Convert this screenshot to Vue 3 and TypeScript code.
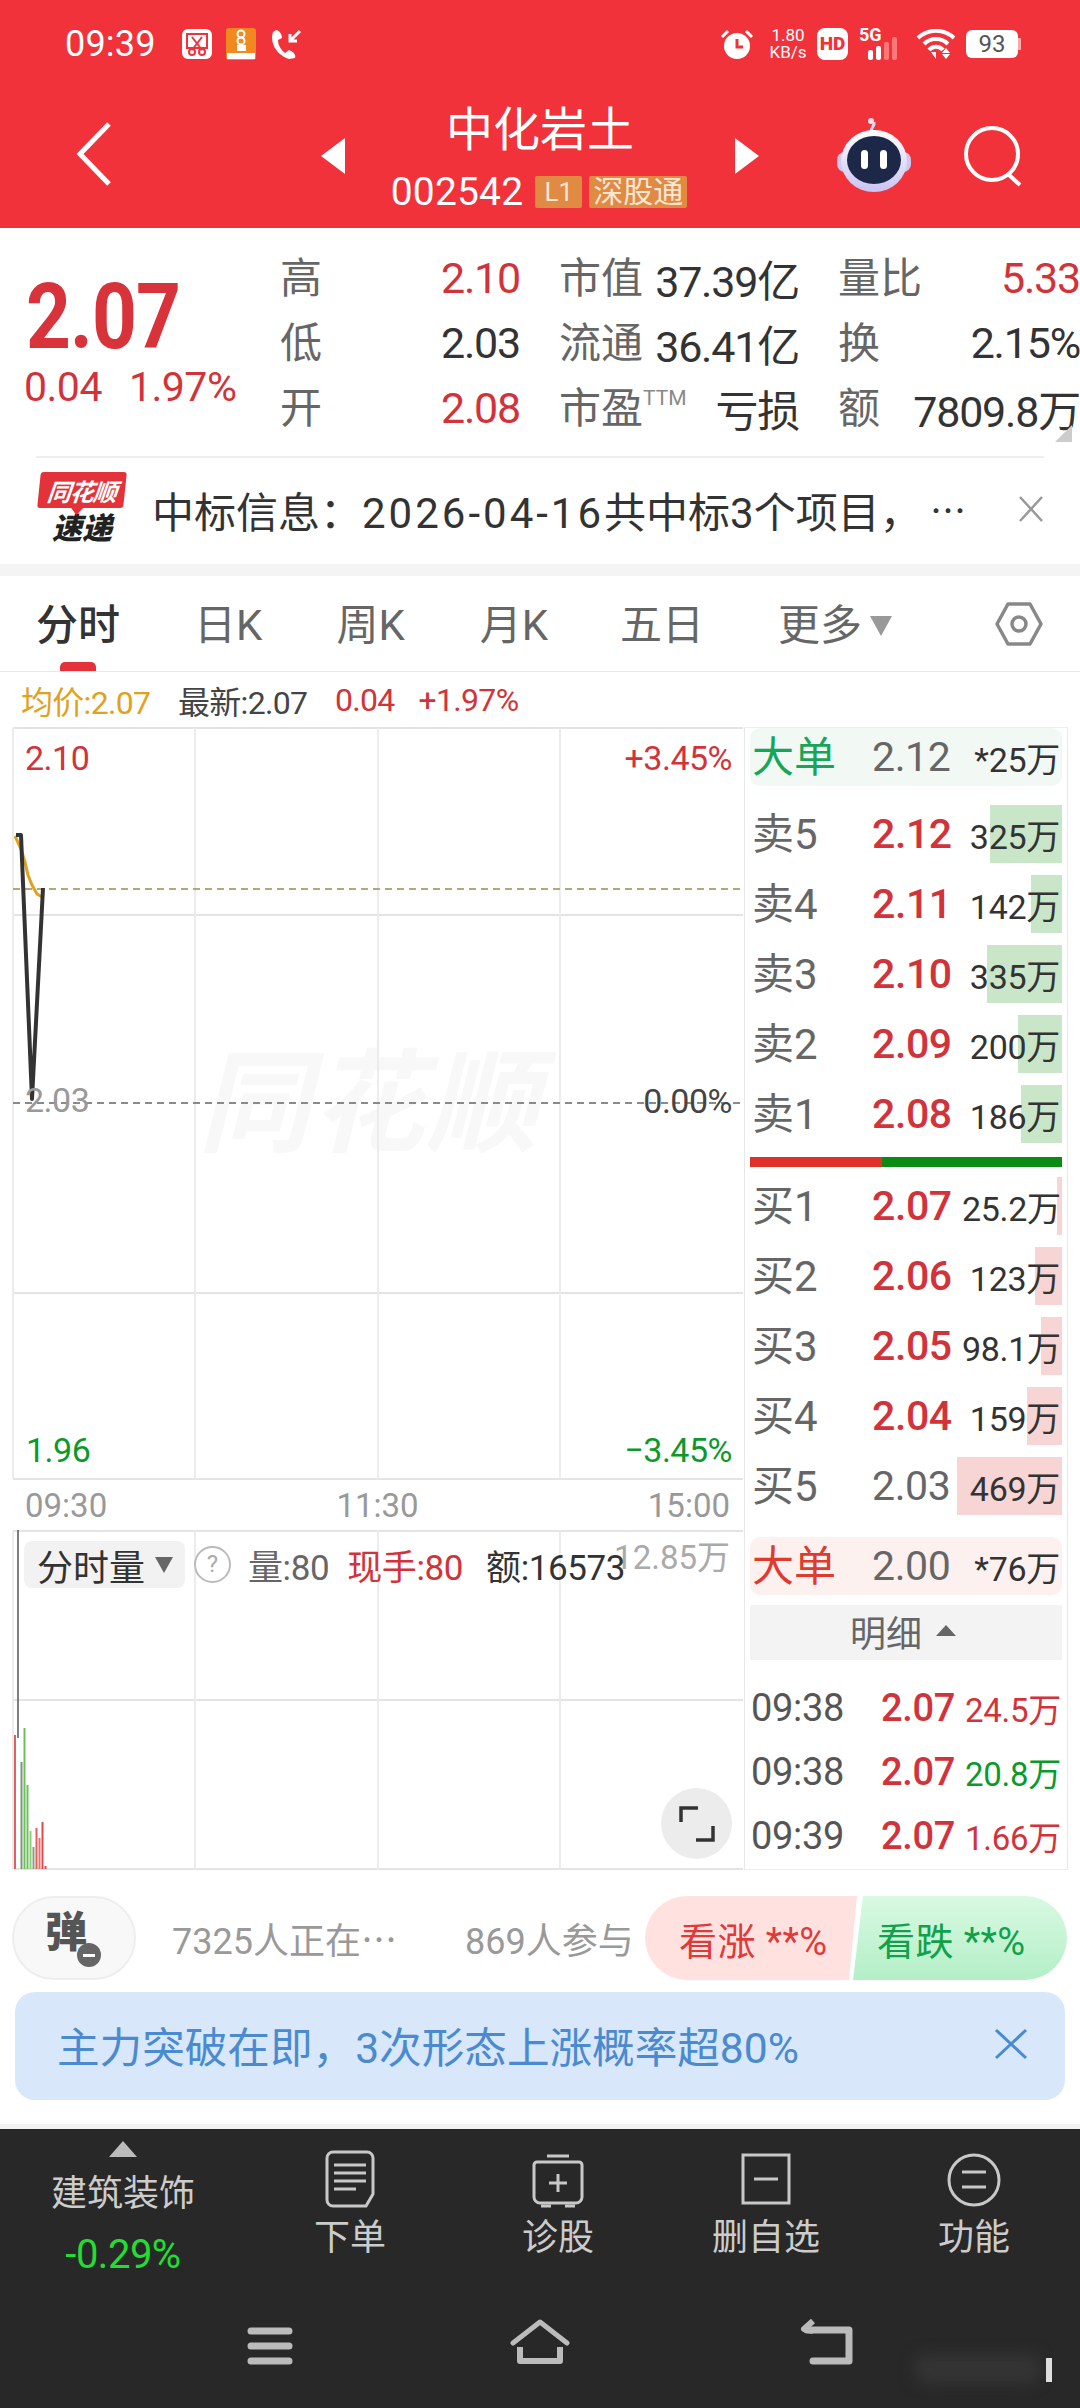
<script setup lang="ts">
interface Row { label: string; price: string; vol: string; bar: number; up: boolean }
const sells: Row[] = [
  { label: '卖5', price: '2.12', vol: '325', bar: 72, up: true },
  { label: '卖4', price: '2.11', vol: '142', bar: 31, up: true },
  { label: '卖3', price: '2.10', vol: '335', bar: 75, up: true },
  { label: '卖2', price: '2.09', vol: '200', bar: 44, up: true },
  { label: '卖1', price: '2.08', vol: '186', bar: 41, up: true },
]
const buys: Row[] = [
  { label: '买1', price: '2.07', vol: '25.2', bar: 5, up: true },
  { label: '买2', price: '2.06', vol: '123', bar: 27, up: true },
  { label: '买3', price: '2.05', vol: '98.1', bar: 21, up: true },
  { label: '买4', price: '2.04', vol: '159', bar: 35, up: true },
  { label: '买5', price: '2.03', vol: '469', bar: 105, up: false },
]
const trades = [
  { t: '09:38', p: '2.07', v: '24.5万', c: 'red' },
  { t: '09:38', p: '2.07', v: '20.8万', c: 'green' },
  { t: '09:39', p: '2.07', v: '1.66万', c: 'red' },
]
const gridX = [13, 195, 378, 560]
const volBars = [
  { x: 15, top: 205, c: '#e06060' },
  { x: 21.5, top: 232, c: '#77997a' },
  { x: 24.5, top: 198, c: '#6cc05a' },
  { x: 27.5, top: 255, c: '#6cc05a' },
  { x: 30.5, top: 301, c: '#8fd07a' },
  { x: 33.5, top: 317, c: '#8fa080' },
  { x: 36.5, top: 298, c: '#e06060' },
  { x: 39.5, top: 308, c: '#e87070' },
  { x: 42.5, top: 292, c: '#e04a4a' },
  { x: 45.5, top: 336, c: '#e04a4a' },
]
const tabs = ['日K', '周K', '月K', '五日']
</script>

<template>
  <div class="app">
    <header class="header">
      <div class="status">
        <span class="clock">09:39</span>
        <svg class="st-ic" width="32" height="30" viewBox="0 0 32 30">
          <rect x="1" y="0" width="30" height="30" rx="6" fill="#fff" />
          <rect x="6" y="5" width="20" height="14" fill="none" stroke="#f2323b" stroke-width="2" />
          <path d="M11 8l10 13M21 8L11 21" stroke="#f2323b" stroke-width="2" />
          <circle cx="11" cy="23" r="3" fill="none" stroke="#f2323b" stroke-width="2" />
          <circle cx="21" cy="23" r="3" fill="none" stroke="#f2323b" stroke-width="2" />
        </svg>
        <svg class="st-ic2" width="30" height="32" viewBox="0 0 30 32">
          <rect width="30" height="32" rx="3" fill="#f08a20" />
          <circle cx="15" cy="6" r="3.5" fill="none" stroke="#fff" stroke-width="2" />
          <circle cx="15" cy="13" r="3.5" fill="none" stroke="#fff" stroke-width="2" />
          <rect x="11" y="17" width="9" height="6" fill="#fff" />
          <rect x="1" y="25" width="28" height="6" fill="#fff" />
        </svg>
        <svg class="st-ic2" width="33" height="31" viewBox="0 0 33 31">
          <path d="M4 3c-3 8 1 22 16 27l6-1c1-3-1-6-6-8l-4 3C11 20 9 15 9 11l4-2C13 5 10 1 7 1z" fill="#fff" />
          <path d="M31 2L21 12M21 5v7h7" fill="none" stroke="#fff" stroke-width="3" />
        </svg>
        <svg class="st-right" width="36" height="32" viewBox="0 0 36 32">
          <circle cx="18" cy="18" r="13" fill="#fff" />
          <path d="M18 11v8h6" fill="none" stroke="#f2323b" stroke-width="3" />
          <path d="M3 9l6-6M33 9l-6-6" stroke="#fff" stroke-width="3" />
        </svg>
        <span class="speed"><b>1.80</b><b>KB/s</b></span>
        <span class="hd">HD</span>
        <span class="signal">
          <span class="five">5G</span>
          <svg width="46" height="24" viewBox="0 0 46 24">
            <rect x="12" y="14" width="5" height="10" rx="2" fill="#fff" />
            <rect x="20" y="10" width="5" height="14" rx="2" fill="#fff" />
            <rect x="28" y="6" width="5" height="18" rx="2" fill="#f77" />
            <rect x="36" y="1" width="5" height="23" rx="2" fill="#f77" />
          </svg>
        </span>
        <svg class="wifi" width="42" height="30" viewBox="0 0 42 30">
          <path d="M2 9a26 26 0 0 1 36 0M8 15a17 17 0 0 1 24 0M13 21a9 9 0 0 1 14 0" fill="none" stroke="#fff" stroke-width="4" />
          <path d="M20 23l-5 0 5 7zM30 19l-4 5h8zM30 30l-4-5h8z" fill="#fff" />
        </svg>
        <span class="battery">93</span><i class="tip"></i>
      </div>
      <div class="nav">
        <svg class="back" width="40" height="66" viewBox="0 0 40 66">
          <path d="M35 3L6 33l29 30" fill="none" stroke="#fff" stroke-width="5" />
        </svg>
        <svg class="tri-l" width="24" height="36" viewBox="0 0 24 36"><path d="M24 0v36L0 18z" fill="#fff" /></svg>
        <div class="name">
          <div class="title">中化岩土</div>
          <div class="code-row">
            <span class="code">002542</span>
            <span class="tag l1">L1</span>
            <span class="tag sg">深股通</span>
          </div>
        </div>
        <svg class="tri-r" width="24" height="36" viewBox="0 0 24 36"><path d="M0 0v36l24-18z" fill="#fff" /></svg>
        <svg class="robot" width="74" height="74" viewBox="0 0 74 74">
          <defs>
            <linearGradient id="rb" x1="0" y1="0" x2="0" y2="1">
              <stop offset="0" stop-color="#fff" />
              <stop offset="1" stop-color="#c9c4f2" />
            </linearGradient>
          </defs>
          <path d="M34 14c0-5 4-6 3-10" fill="none" stroke="#dcd8fa" stroke-width="3" />
          <circle cx="34" cy="3" r="3" fill="#f8e2e6" />
          <rect x="0" y="34" width="74" height="20" rx="8" fill="#cfc8f4" />
          <ellipse cx="37" cy="43" rx="33" ry="31" fill="url(#rb)" />
          <ellipse cx="37" cy="42" rx="27" ry="24" fill="#1d2748" />
          <rect x="24" y="32" width="7" height="19" rx="3.5" fill="#fff" />
          <rect x="43" y="32" width="7" height="19" rx="3.5" fill="#fff" />
        </svg>
        <svg class="search" width="62" height="62" viewBox="0 0 62 62">
          <circle cx="29" cy="29" r="26" fill="none" stroke="#fff" stroke-width="4" />
          <path d="M44 48l13 12" stroke="#fff" stroke-width="4" />
        </svg>
      </div>
    </header>

    <section class="quote">
      <div class="big">
        <div class="now">2.07</div>
        <div class="delta"><span>0.04</span><span>1.97%</span></div>
      </div>
      <div class="q-grid">
        <div class="cell"><span class="k">高</span><span class="v red">2.10</span></div>
        <div class="cell"><span class="k">市值</span><span class="v">37.39亿</span></div>
        <div class="cell"><span class="k">量比</span><span class="v red">5.33</span></div>
        <div class="cell"><span class="k">低</span><span class="v">2.03</span></div>
        <div class="cell"><span class="k">流通</span><span class="v">36.41亿</span></div>
        <div class="cell"><span class="k">换</span><span class="v">2.15%</span></div>
        <div class="cell"><span class="k">开</span><span class="v red">2.08</span></div>
        <div class="cell"><span class="k">市盈<sup class="ttm">TTM</sup></span><span class="v">亏损</span></div>
        <div class="cell"><span class="k">额</span><span class="v">7809.8万</span></div>
      </div>
      <i class="corner"></i>
    </section>

    <section class="news">
      <div class="logo">
        <div class="flag"><span>同花顺</span></div>
        <div class="sd">速递</div>
      </div>
      <div class="news-text">中标信息：<span class="date">2026-04-16</span>共中标3个项目，</div>
      <span class="more cjk">…</span>
      <svg class="news-x" width="26" height="30" viewBox="0 0 26 30">
        <path d="M2 3l22 24M24 3L2 27" stroke="#999" stroke-width="2.5" fill="none" />
      </svg>
    </section>

    <div class="gap"></div>

    <nav class="tabs">
      <div class="tab on">分时<i class="bar"></i></div>
      <div v-for="t in tabs" :key="t" class="tab">{{ t }}</div>
      <div class="tab more-tab">更多<i class="caret"></i></div>
      <svg class="hex" width="48" height="46" viewBox="0 0 48 46">
        <path d="M13 3h22l11 20-11 20H13L2 23z" fill="none" stroke="#888" stroke-width="3.5" stroke-linejoin="round" />
        <circle cx="24" cy="23" r="7" fill="none" stroke="#888" stroke-width="3.5" />
      </svg>
    </nav>

    <div class="info">
      <span class="avg">均价:2.07</span>
      <span class="last">最新:2.07</span>
      <span class="red">0.04</span>
      <span class="red pct">+1.97%</span>
    </div>

    <main class="main">
      <div class="left">
        <div class="price-chart">
          <div class="wm">同花顺</div>
          <svg class="canvas" width="745" height="753" viewBox="0 0 745 753">
            <path d="M13 1H743M13 188H743M13 566H743M13 752H743" stroke="#e4e4e4" stroke-width="2" fill="none" />
            <path v-for="x in gridX" :key="x" :d="`M${x} 1V752`" stroke="#ececec" stroke-width="2" fill="none" />
            <path d="M13 162H743" stroke="#b5a77a" stroke-width="2" stroke-dasharray="7 5" fill="none" />
            <path d="M13 376H743" stroke="#8a8a8a" stroke-width="2" stroke-dasharray="7 5" fill="none" />
            <path d="M15 109L21 122L25 135L28 148L32 158L37 167L42 170" stroke="#e0a21e" stroke-width="3" fill="none" />
            <path d="M16 108H21L32 372L43 161" stroke="#333" stroke-width="4" fill="none" stroke-linejoin="round" />
          </svg>
          <span class="lb tl red">2.10</span>
          <span class="lb tr red">+3.45%</span>
          <span class="lb ml">2.03</span>
          <span class="lb mr">0.00%</span>
          <span class="lb bl green">1.96</span>
          <span class="lb br green">−3.45%</span>
        </div>
        <div class="axis"><span>09:30</span><span>11:30</span><span>15:00</span></div>
        <div class="vol-chart">
          <svg class="canvas" width="745" height="341" viewBox="0 0 745 341">
            <path d="M13 1H743M13 170H743M13 339H743" stroke="#e4e4e4" stroke-width="2" fill="none" />
            <path v-for="x in gridX" :key="x" :d="`M${x} 1V339`" stroke="#ececec" stroke-width="2" fill="none" />
            <path d="M18 0V208" stroke="#555" stroke-width="1.5" fill="none" />
            <path v-for="b in volBars" :key="b.x" :d="`M${b.x} ${b.top}V339`" :stroke="b.c" stroke-width="2" fill="none" />
          </svg>
          <span class="vmax">12.85万</span>
          <div class="vol-head">
            <div class="pill">分时量<i class="caret caret-d"></i></div>
            <span class="q">?</span>
            <span class="vh grey">量:80</span>
            <span class="vh red">现手:80</span>
            <span class="vh">额:16573</span>
          </div>
          <div class="expand">
            <svg width="36" height="38" viewBox="0 0 36 38">
              <path d="M2 17V3H19M34 21V35H17" fill="none" stroke="#333" stroke-width="3.5" />
            </svg>
          </div>
        </div>
      </div>

      <aside class="panel">
        <div class="bigrow green-bg">
          <span class="lab green-d">大单</span><span class="pr grey">2.12</span><span class="vo">*25万</span>
        </div>
        <div class="group first">
          <div v-for="r in sells" :key="r.label" class="row">
            <i class="vbar sell" :style="{ width: r.bar + 'px' }"></i>
            <span class="lab grey">{{ r.label }}</span><span class="pr red m">{{ r.price }}</span><span class="vo">{{ r.vol }}万</span>
          </div>
        </div>
        <div class="split"><i class="s-r"></i><i class="s-g"></i></div>
        <div class="group second">
          <div v-for="r in buys" :key="r.label" class="row">
            <i class="vbar buy" :style="{ width: r.bar + 'px' }"></i>
            <span class="lab grey">{{ r.label }}</span><span class="pr" :class="r.up ? 'red m' : 'grey'">{{ r.price }}</span><span class="vo">{{ r.vol }}万</span>
          </div>
        </div>
        <div class="bigrow red-bg">
          <span class="lab red-d">大单</span><span class="pr grey">2.00</span><span class="vo">*76万</span>
        </div>
        <div class="detail">明细<i class="up-caret"></i></div>
        <div class="trades">
          <div v-for="(t, i) in trades" :key="i" class="trade">
            <span class="tt">{{ t.t }}</span><span class="tp red">{{ t.p }}</span><span class="tv" :class="t.c">{{ t.v }}</span>
          </div>
        </div>
      </aside>
    </main>

    <section class="social">
      <div class="danmu">
        <span class="dan">弹</span><i class="minus"></i>
      </div>
      <span class="s1">7325人正在<span class="cjk">…</span></span>
      <span class="s2">869人参与</span>
      <div class="vote">
        <div class="up">看涨 **%</div>
        <div class="down">看跌 **%</div>
      </div>
    </section>

    <section class="banner">
      <span>主力突破在即，3次形态上涨概率超80%</span>
      <svg width="34" height="32" viewBox="0 0 34 32">
        <path d="M2 2l30 28M32 2L2 30" stroke="#4a8ad0" stroke-width="3" fill="none" />
      </svg>
    </section>

    <div class="strip"></div>

    <footer class="footer">
      <div class="toolbar">
        <div class="sector">
          <i class="sec-tri"></i>
          <div class="sec-name">建筑装饰</div>
          <div class="sec-pct">-0.29%</div>
        </div>
        <div class="tool">
          <svg width="60" height="60" viewBox="0 0 60 60">
            <path d="M13 2H47a6 6 0 0 1 6 6V44L46 56H13a6 6 0 0 1-6-6V8a6 6 0 0 1 6-6z" fill="none" stroke="#c8c8c8" stroke-width="3" />
            <path d="M14 15H46M14 23H46M14 31H46M14 39H36" stroke="#c8c8c8" stroke-width="3" fill="none" />
          </svg>
          <span>下单</span>
        </div>
        <div class="tool">
          <svg width="60" height="60" viewBox="0 0 60 60">
            <path d="M19 6H41M9 12H51a3 3 0 0 1 3 3V47a6 6 0 0 1-6 6H12a6 6 0 0 1-6-6V15a3 3 0 0 1 3-3z" fill="none" stroke="#c8c8c8" stroke-width="3" />
            <path d="M30 24V42M21 33H39M13 56H23M37 56H47" stroke="#c8c8c8" stroke-width="3" fill="none" />
          </svg>
          <span>诊股</span>
        </div>
        <div class="tool">
          <svg width="60" height="60" viewBox="0 0 60 60">
            <rect x="7" y="5" width="46" height="48" fill="none" stroke="#c8c8c8" stroke-width="3" />
            <path d="M18 29H42" stroke="#c8c8c8" stroke-width="3" fill="none" />
          </svg>
          <span>删自选</span>
        </div>
        <div class="tool">
          <svg width="60" height="60" viewBox="0 0 60 60">
            <circle cx="30" cy="30" r="25" fill="none" stroke="#c8c8c8" stroke-width="3" />
            <path d="M18 22H42M18 37H42" stroke="#c8c8c8" stroke-width="3" fill="none" />
          </svg>
          <span>功能</span>
        </div>
      </div>
      <div class="sysnav">
        <svg width="46" height="38" viewBox="0 0 46 38">
          <path d="M4 4H42M4 19H42M4 34H42" stroke="#bbb" stroke-width="7" stroke-linecap="round" fill="none" />
        </svg>
        <svg width="60" height="46" viewBox="0 0 60 46">
          <path d="M3 24L30 3L57 24" stroke="#bbb" stroke-width="5" stroke-linecap="round" stroke-linejoin="round" fill="none" />
          <path d="M10 28V42H50V28" stroke="#bbb" stroke-width="6" stroke-linejoin="round" fill="none" />
        </svg>
        <svg width="54" height="46" viewBox="0 0 54 46">
          <path d="M14 2L5 10L14 12" stroke="#bbb" stroke-width="6" stroke-linejoin="round" fill="none" />
          <path d="M8 11H50V42H14" stroke="#bbb" stroke-width="7" stroke-linecap="round" stroke-linejoin="round" fill="none" />
        </svg>
      </div>
      <i class="smudge"></i>
      <i class="smudge-end"></i>
    </footer>
  </div>
</template>

<style scoped>
.app {
  width: 1080px;
  height: 2408px;
  overflow: hidden;
  background: #fff;
  display: flex;
  flex-direction: column;
  font-family: Roboto, "Noto Sans CJK SC", sans-serif;
  color: #333;
}
.cjk { font-family: "Noto Sans CJK SC", sans-serif; }
.red { color: #d2333a; }
.green { color: #0a9a2c; }
.grey { color: #666; }
i { display: block; }

/* header */
.header { height: 228px; background: #f2323b; color: #fff; flex: none; }
.status { height: 88px; display: flex; align-items: center; padding-left: 65px; }
.clock { font-size: 36px; width: 116px; letter-spacing: .2px; }
.st-ic2 { margin-left: 13px; }
.st-right { margin-left: auto; }
.speed { display: flex; flex-direction: column; margin-left: 13px; line-height: 17px; font-size: 17px; width: 40px; text-align: center; }
.speed b { font-weight: 400; }
.hd { margin-left: 9px; width: 31px; height: 32px; border-radius: 8px; background: #fff; color: #f2323b; font-weight: 900; font-size: 19px; line-height: 32px; text-align: center; }
.signal { position: relative; margin-left: 8px; width: 46px; height: 32px; display: block; }
.signal svg { position: absolute; left: 0; bottom: 0; }
.five { position: absolute; left: 3px; top: -3px; font-size: 18px; font-weight: 700; line-height: 20px; }
.wifi { margin-left: 14px; }
.battery { margin-left: 8px; width: 52px; height: 28px; border-radius: 6px; background: #fff; color: #555; font-size: 24px; line-height: 28px; text-align: center; }
.tip { width: 3px; height: 12px; background: #f9a9a9; margin-right: 59px; }
.nav { height: 140px; display: flex; align-items: flex-start; }
.back { margin: 33px 0 0 74px; flex: none; }
.tri-l { margin: 50px 0 0 207px; flex: none; }
.name { width: 390px; flex: none; display: flex; flex-direction: column; align-items: center; padding-top: 12px; }
.title { font-size: 47px; line-height: 60px; }
.code-row { display: flex; align-items: center; margin-top: 16px; height: 32px; margin-left: -2px; }
.code { font-size: 39px; letter-spacing: .2px; margin-right: 12px; }
.tag { background: #e08a44; color: #fbe7d4; height: 32px; line-height: 32px; font-size: 26px; border-radius: 2px; text-align: center; }
.l1 { width: 47px; }
.sg { width: 98px; margin-left: 7px; font-size: 30px; }
.tri-r { margin-top: 50px; flex: none; }
.robot { margin: 30px 0 0 78px; flex: none; }
.search { margin: 37px 0 0 52px; flex: none; }

/* quote */
.quote { height: 228px; flex: none; display: flex; padding-top: 17px; position: relative; box-sizing: border-box; }
.big { width: 280px; flex: none; padding-left: 26px; box-sizing: border-box; }
.now { font-size: 90px; font-weight: 700; color: #d8333a; line-height: 70px; margin-top: 38px; transform: scaleX(.87); transform-origin: left center; letter-spacing: -1px; }
.delta { display: flex; gap: 27px; margin-top: 11px; font-size: 41px; color: #d2333a; line-height: 46px; margin-left: -2px; letter-spacing: -.5px; }
.q-grid { display: grid; grid-template-columns: 240px 240px 242px; column-gap: 39px; grid-auto-rows: 65px; width: 800px; }
.cell { display: flex; justify-content: space-between; align-items: center; white-space: nowrap; }
.k { font-size: 42px; color: #666; position: relative; margin-bottom: 6px; }
.v { font-size: 43px; letter-spacing: -1.2px; color: #333; }
.v.red { color: #d2333a; }
.ttm { font-size: 21px; color: #888; vertical-align: 18px; line-height: 0; }
.corner { position: absolute; right: 8px; bottom: 14px; width: 0; height: 0; border-left: 17px solid transparent; border-bottom: 17px solid #ccc; }

/* news */
.news { margin: 0 36px; border-top: 2px solid #eee; height: 108px; flex: none; display: flex; align-items: center; padding-bottom: 4px; box-sizing: border-box; }
.logo { width: 90px; flex: none; margin-left: 1px; }
.flag { position: relative; background: #e3323a; height: 36px; transform: skewX(-6deg); border-radius: 3px; display: flex; align-items: center; justify-content: center; color: #fff; font-size: 24px; font-weight: 700; font-style: italic; width: 86px; margin-left: 2px; }
.flag::after { content: ""; position: absolute; left: 34px; top: 36px; border-left: 6px solid transparent; border-right: 6px solid transparent; border-top: 7px solid #e3323a; }
.flag span { white-space: nowrap; letter-spacing: -1px; }
.sd { font-size: 30px; font-weight: 900; color: #222; font-style: italic; line-height: 34px; text-align: center; margin-top: 4px; }
.news-text { margin-left: 25px; font-size: 42px; color: #333; white-space: nowrap; width: 780px; }
.date { letter-spacing: 3px; }
.more { font-size: 36px; color: #333; width: 0; overflow: visible; white-space: nowrap; margin-left: -2px; }
.news-x { margin-left: auto; flex: none; }
.gap { height: 12px; background: #f4f4f4; flex: none; }

/* tabs */
.tabs { height: 96px; flex: none; display: flex; align-items: center; padding: 0 37px 0 36px; gap: 72px; border-bottom: 1px solid #e8e8e8; box-sizing: border-box; }
.tab { font-size: 42px; line-height: 50px; color: #666; position: relative; white-space: nowrap; margin-top: 5px; }
.tab:nth-child(3) { margin-left: 2px; }
.tab:nth-child(4) { margin-left: 3px; }
.tab.on { color: #333; font-weight: 500; margin-right: 2px; }
.bar { position: absolute; left: 24px; top: 61px; width: 36px; height: 9px; background: #e3323a; border-radius: 5px 5px 0 0; }
.more-tab { margin-left: 2px; display: flex; align-items: center; }
.caret { width: 0; height: 0; margin-left: 8px; border-left: 11px solid transparent; border-right: 11px solid transparent; border-top: 20px solid #999; }
.caret-d { margin-left: 10px; border-left-width: 9px; border-right-width: 9px; border-top: 16px solid #666; }
.hex { margin-left: auto; flex: none; }

.info { height: 55px; flex: none; display: flex; align-items: center; padding-left: 21px; font-size: 32px; white-space: nowrap; letter-spacing: -.7px; }
.avg { color: #e0a21e; width: 157px; }
.last { color: #444; width: 157px; }
.pct { margin-left: 24px; }

/* main */
.main { display: flex; height: 1143px; flex: none; }
.left { width: 744px; flex: none; }
.price-chart { height: 753px; position: relative; }
.canvas { position: absolute; left: 0; top: 0; display: block; }
.wm { position: absolute; left: 198px; top: 322px; font-size: 112px; line-height: 112px; font-weight: 700; font-style: italic; color: #f8f8f8; letter-spacing: 2px; white-space: nowrap; }
.lb { position: absolute; font-size: 34px; line-height: 36px; letter-spacing: -.5px; }
.tl { left: 25px; top: 13px; }
.tr { right: 12px; top: 13px; }
.ml { left: 25px; top: 355px; color: #999; }
.mr { right: 12px; top: 356px; color: #444; }
.bl { left: 26px; top: 705px; }
.br { right: 12px; top: 705px; }
.axis { height: 50px; display: flex; justify-content: space-between; align-items: center; padding: 0 14px 0 25px; font-size: 33px; color: #999; }
.vol-chart { height: 340px; position: relative; }
.vol-head { position: absolute; left: 24px; top: 11px; display: flex; align-items: center; height: 47px; white-space: nowrap; }
.pill { width: 161px; height: 47px; background: #f2f2f2; border-radius: 8px; display: flex; align-items: center; padding-left: 13px; box-sizing: border-box; font-size: 36px; color: #333; }
.q { width: 33px; height: 33px; margin-left: 9px; border: 2px solid #bbb; border-radius: 50%; color: #aaa; font-size: 24px; line-height: 33px; text-align: center; }
.vh { font-size: 35px; margin-left: 17px; letter-spacing: -.4px; }
.vh.red { margin-left: 18px; }
.vh:last-child { margin-left: 23px; color: #333; }
.vmax { position: absolute; right: 14px; top: 9px; font-size: 33px; line-height: 38px; color: #aaa; }
.expand { position: absolute; left: 661px; top: 258px; width: 71px; height: 71px; border-radius: 50%; background: #ececec; display: flex; align-items: center; justify-content: center; }

/* panel */
.panel { width: 324px; flex: none; box-sizing: border-box; border-left: 1px solid #e8e8e8; border-right: 1px solid #e8e8e8; padding: 0 5px; border-top: 1px solid #eee; border-bottom: 1px solid #eee; height: 1143px; overflow: hidden; }
.bigrow { height: 58px; border-radius: 10px; display: flex; align-items: center; position: relative; }
.green-bg { background: #f2f9f5; }
.red-bg { background: #fdf1f0; margin-top: 16px; }
.group.first { margin-top: 13px; }
.group.second { margin-top: 4px; }
.row { height: 70px; display: flex; align-items: center; position: relative; }
.vbar { position: absolute; right: 0; top: 6px; height: 58px; }
.sell { background: #c9e6c9; }
.buy { background: #f8d5d5; }
.lab { position: relative; width: 120px; margin: 0 0 8px 2px; font-size: 42px; flex: none; }
.green-d { color: #17a55a; }
.red-d { color: #df3a2e; }
.pr { position: relative; font-size: 41px; width: 90px; flex: none; letter-spacing: -.4px; }
.pr.m { font-weight: 500; }
.vo { position: relative; margin-left: auto; padding-right: 2px; font-size: 34px; color: #333; white-space: nowrap; letter-spacing: -.3px; }
.split { display: flex; height: 10px; margin-top: 8px; }
.s-r { width: 132px; background: #e0302a; }
.s-g { flex: 1; background: #0b8a14; }
.detail { height: 55px; margin-top: 10px; background: #f3f3f3; display: flex; align-items: center; justify-content: flex-start; padding: 0 0 4px 100px; box-sizing: border-box; font-size: 36px; color: #666; }
.up-caret { width: 0; height: 0; margin-left: 14px; border-left: 10px solid transparent; border-right: 10px solid transparent; border-bottom: 11px solid #666; }
.trades { margin-top: 16px; }
.trade { height: 64px; display: flex; align-items: center; }
.tt { width: 130px; margin-left: 1px; font-size: 38px; color: #555; flex: none; letter-spacing: -.3px; }
.tp { width: 84px; font-size: 38px; font-weight: 500; flex: none; letter-spacing: -.3px; }
.tv { font-size: 33px; white-space: nowrap; letter-spacing: -.3px; }

/* social */
.social { height: 122px; flex: none; box-sizing: border-box; padding: 26px 0 12px 12px; display: flex; align-items: center; position: relative; }
.danmu { width: 124px; height: 84px; box-sizing: border-box; border: 2px solid #eee; border-radius: 42px; background: #f8f8f8; position: relative; flex: none; }
.dan { position: absolute; left: 31px; top: 7px; font-size: 42px; font-weight: 900; color: #555; line-height: 56px; }
.minus { position: absolute; left: 63px; top: 45px; width: 24px; height: 24px; border-radius: 50%; background: #666; }
.minus::after { content: ""; position: absolute; left: 6px; top: 11px; width: 12px; height: 3px; background: #fff; }
.s1 { margin-left: 36px; width: 293px; font-size: 36px; color: #999; white-space: nowrap; flex: none; }
.s2 { font-size: 36px; color: #999; white-space: nowrap; width: 180px; flex: none; }
.vote { display: flex; height: 84px; flex: none; }
.up, .down { height: 84px; display: flex; align-items: center; font-size: 38px; white-space: nowrap; box-sizing: border-box; letter-spacing: .4px; }
.up { width: 212px; padding-left: 34px; color: #df3a3a; background: #ffe2df; border-radius: 42px 0 0 42px; clip-path: polygon(0 0, 100% 0, calc(100% - 8px) 100%, 0 100%); }
.down { width: 214px; margin-left: -4px; padding-left: 24px; color: #10a14a; background: linear-gradient(#d9f9e2, #b3efc7); border-radius: 0 42px 42px 0; clip-path: polygon(10px 0, 100% 0, 100% 100%, 0 100%); }
.banner { margin: 0 15px; height: 108px; flex: none; background: #d8e7fa; border-radius: 20px; display: flex; align-items: center; justify-content: space-between; padding: 0 37px 4px 42px; box-sizing: border-box; font-size: 42.6px; color: #4a8ad0; white-space: nowrap; }
.strip { height: 5px; margin-top: 24px; background: #f3f3f3; flex: none; }

/* footer */
.footer { flex: 1; background: #282828; position: relative; }
.toolbar { height: 161px; display: flex; }
.sector { width: 246px; flex: none; display: flex; flex-direction: column; align-items: center; }
.sec-tri { margin-top: 12px; width: 0; height: 0; border-left: 14px solid transparent; border-right: 14px solid transparent; border-bottom: 16px solid #bbb; }
.sec-name { margin-top: 13px; font-size: 36px; line-height: 48px; color: #ccc; }
.sec-pct { margin-top: 13px; font-size: 40px; line-height: 48px; color: #22dd33; letter-spacing: -.5px; }
.tool { width: 208px; flex: none; display: flex; flex-direction: column; align-items: center; padding-top: 21px; font-size: 36px; color: #ccc; }
.tool span { margin-top: 3px; line-height: 50px; white-space: nowrap; }
.sysnav { display: flex; align-items: flex-end; height: 75px; }
.sysnav svg:nth-child(1) { margin-left: 247px; }
.sysnav svg:nth-child(2) { margin-left: 217px; }
.sysnav svg:nth-child(3) { margin-left: 229px; }
.smudge { position: absolute; left: 915px; top: 225px; width: 125px; height: 30px; background: #343434; filter: blur(7px); border-radius: 10px; }
.smudge-end { position: absolute; left: 1046px; top: 229px; width: 6px; height: 24px; background: #ddd; }
</style>
